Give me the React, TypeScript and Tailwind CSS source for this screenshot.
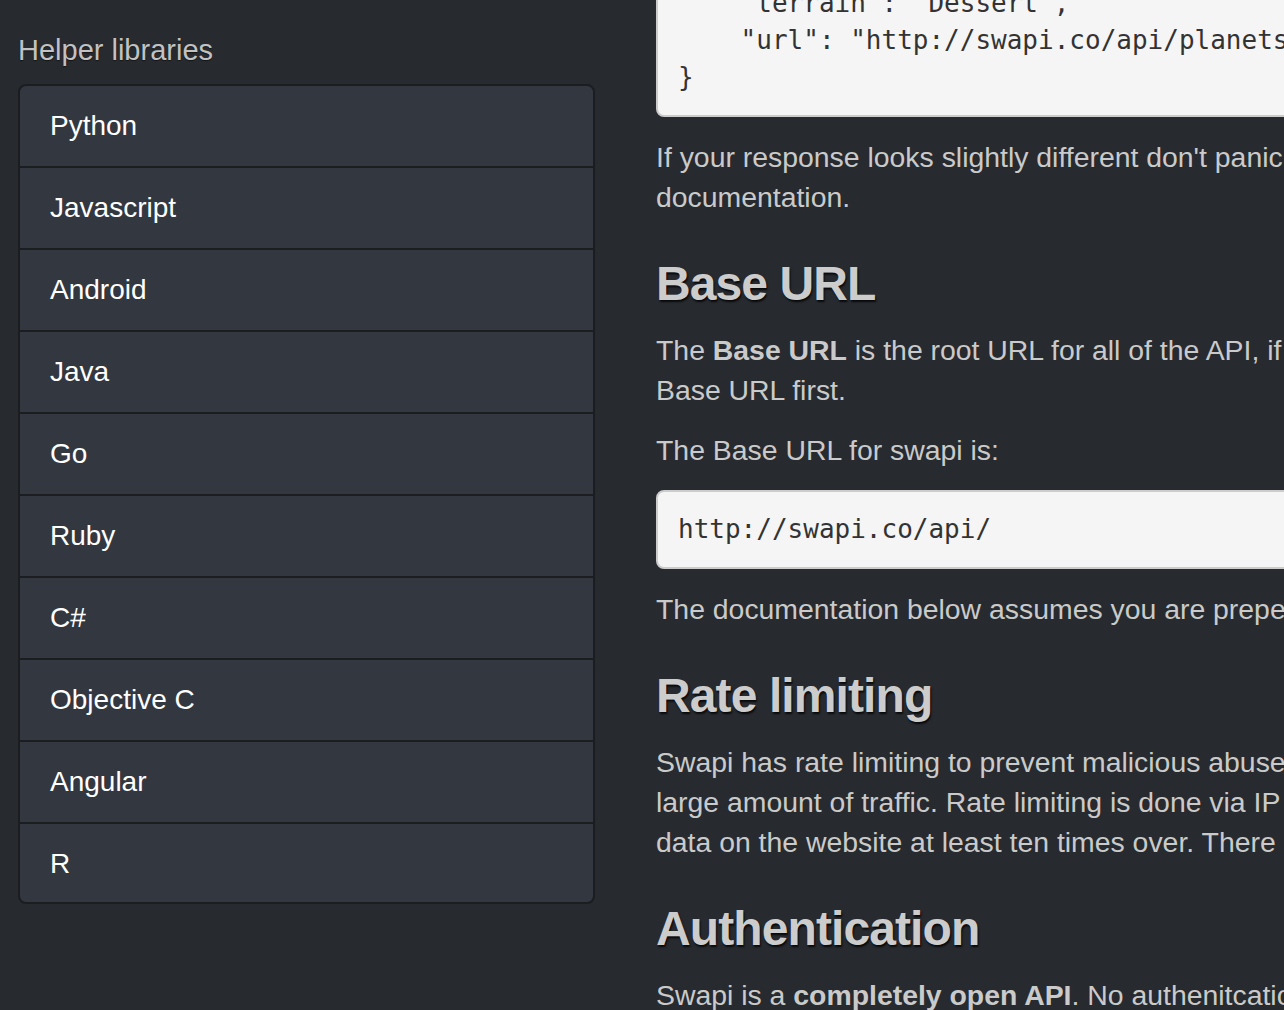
const LIBRARIES = ["Python", "Javascript", "Android", "Java", "Go", "Ruby", "C#", "Objective C", "Angular", "R"];

export default function App() {
    return (
        <div className="h-[1010px] w-full overflow-hidden bg-[#272a2f] font-['Liberation_Sans',Arial,sans-serif] flex">
            {/* Sidebar */}
            <aside className="ml-[18px] w-[577px] shrink-0 pt-[35px]">
                <h5 className="text-[29px] leading-[31px] text-[#c2c2c2] mb-[18px] [text-shadow:0_1px_1px_rgba(0,0,0,0.5)]">Helper libraries</h5>
                <div className="rounded-[8px] border-2 border-[#1b1d21] bg-[#333740] overflow-hidden">
                    {LIBRARIES.map((lib, i) => (
                        <div
                            key={lib}
                            className={
                                "px-[30px] pt-[20px] text-[28px] leading-[40px] text-white " +
                                (i < LIBRARIES.length - 1 ? "pb-[20px] border-b-2 border-[#1b1d21]" : "pb-[18px]")
                            }
                        >
                            {lib}
                        </div>
                    ))}
                </div>
            </aside>

            {/* Docs */}
            <main className="ml-[61px] w-[1000px] shrink-0 whitespace-nowrap text-[28.4px] leading-[40px] text-[#cacaca]">
                <pre className="mt-[-110px] mb-[20px] rounded-[8px] border-2 border-[#cccccc] bg-[#f5f5f5] px-[20px] py-[19px] font-['DejaVu_Sans_Mono',monospace] text-[26px] leading-[37px] text-[#333333]">
{`    "surface_water": "1",
    "population": "200000",
    "terrain": "Dessert",
    "url": "http://swapi.co/api/planets/1/"
}`}
                </pre>
                <p className="mb-[20px]">
                    If your response looks slightly different don't panic. This is probably because more data has been added to swapi since we made this
                    <br />
                    documentation.
                </p>

                <Heading>Base URL</Heading>
                <p className="mb-[20px]">
                    The <b>Base URL</b> is the root URL for all of the API, if you ever make a request to swapi and you get back a 404 NOT FOUND response then check the
                    <br />
                    Base URL first.
                </p>
                <p className="mb-[20px]">The Base URL for swapi is:</p>
                <pre className="mb-[20px] rounded-[8px] border-2 border-[#cccccc] bg-[#f5f5f5] px-[20px] py-[19px] font-['DejaVu_Sans_Mono',monospace] text-[26px] leading-[37px] text-[#333333]">
                    http://swapi.co/api/
                </pre>
                <p className="mb-[20px]">
                    The documentation below assumes you are prepending the Base URL to the endpoints in order to make requests.
                </p>

                <Heading>Rate limiting</Heading>
                <p className="mb-[20px]">
                    Swapi has rate limiting to prevent malicious abuse (as if anyone would abuse Star Wars data!) and to make sure our service can handle a potentially
                    <br />
                    large amount of traffic. Rate limiting is done via IP address and is currently limited to 10,000 API requests per day. This is enough to request all the
                    <br />
                    data on the website at least ten times over. There should be no reason for hitting the rate limit.
                </p>

                <Heading>Authentication</Heading>
                <p className="mb-[20px]">
                    Swapi is a <b>completely open API</b>. No authenitcation is required to query and get data. This also means that we've limited what you can do to just
                </p>
            </main>
        </div>
    );
}

function Heading({ children }: { children: React.ReactNode }) {
    return (
        <h3 className="mt-[40px] mb-[20px] text-[48px] leading-[53px] font-bold tracking-[-0.9px] text-[#cccccc] [text-shadow:1px_2px_2px_rgba(0,0,0,0.8)]">
            {children}
        </h3>
    );
}
